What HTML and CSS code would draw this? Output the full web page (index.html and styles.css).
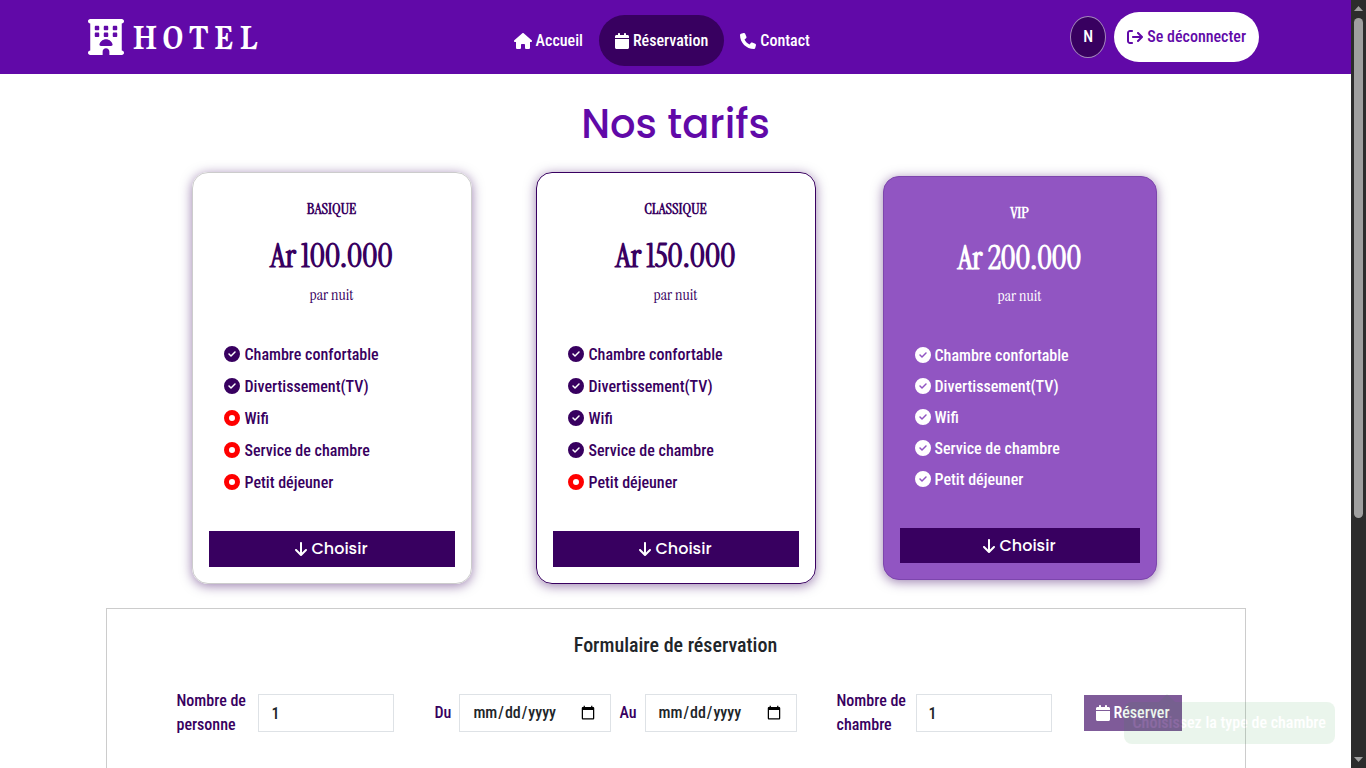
FILE: index.html
```html
<!DOCTYPE html>
<html lang="fr">
<head>
<meta charset="utf-8">
<meta name="viewport" content="width=device-width, initial-scale=1">
<title>Hotel - Réservation</title>
<link rel="stylesheet" href="styles.css">
</head>
<body>
<svg class="sprite" aria-hidden="true">
  <symbol id="i-hotel" viewBox="0 0 512 512"><path d="M0 32C0 14.3 14.3 0 32 0H480c17.7 0 32 14.3 32 32s-14.3 32-32 32V448c17.7 0 32 14.3 32 32s-14.3 32-32 32H304V464c0-26.5-21.5-48-48-48s-48 21.5-48 48v48H32c-17.7 0-32-14.3-32-32s14.3-32 32-32V64C14.3 64 0 49.7 0 32zm96 80v32c0 8.8 7.2 16 16 16h32c8.8 0 16-7.2 16-16V112c0-8.8-7.2-16-16-16H112c-8.8 0-16 7.2-16 16zM240 96c-8.8 0-16 7.2-16 16v32c0 8.8 7.2 16 16 16h32c8.8 0 16-7.2 16-16V112c0-8.8-7.2-16-16-16H240zm112 16v32c0 8.8 7.2 16 16 16h32c8.8 0 16-7.2 16-16V112c0-8.8-7.2-16-16-16H368c-8.8 0-16 7.2-16 16zM112 192c-8.8 0-16 7.2-16 16v32c0 8.8 7.2 16 16 16h32c8.8 0 16-7.2 16-16V208c0-8.8-7.2-16-16-16H112zm112 16v32c0 8.8 7.2 16 16 16h32c8.8 0 16-7.2 16-16V208c0-8.8-7.2-16-16-16H240c-8.8 0-16 7.2-16 16zm144-16c-8.8 0-16 7.2-16 16v32c0 8.8 7.2 16 16 16h32c8.8 0 16-7.2 16-16V208c0-8.8-7.2-16-16-16H368zM328 384c13.3 0 24.3-10.9 21-23.8c-10.6-41.5-48.2-72.2-93-72.2s-82.5 30.7-93 72.2c-3.3 12.8 7.8 23.8 21 23.8H328z"/></symbol>
  <symbol id="i-house" viewBox="0 0 576 512"><path d="M575.8 255.5c0 18-15 32.1-32 32.1h-32l.7 160.2c0 2.7-.2 5.4-.5 8.1V472c0 22.1-17.9 40-40 40H456c-1.1 0-2.2 0-3.3-.1c-1.4 .1-2.8 .1-4.2 .1H416 392c-22.1 0-40-17.9-40-40V448 384c0-17.7-14.3-32-32-32H256c-17.7 0-32 14.3-32 32v64 24c0 22.1-17.9 40-40 40H160 128.1c-1.5 0-3-.1-4.5-.2c-1.2 .1-2.4 .2-3.6 .2H104c-22.1 0-40-17.9-40-40V360c0-.9 0-1.9 .1-2.8V287.6H32c-18 0-32-14-32-32.1c0-9 3-17 10-24L266.4 8c7-7 15-8 22-8s15 2 21 7L564.8 231.5c8 7 12 15 11 24z"/></symbol>
  <symbol id="i-calendar" viewBox="0 0 448 512"><path d="M96 32V64H48C21.5 64 0 85.5 0 112v48H448V112c0-26.5-21.5-48-48-48H352V32c0-17.7-14.3-32-32-32s-32 14.3-32 32V64H160V32c0-17.7-14.3-32-32-32S96 14.3 96 32zM448 192H0V464c0 26.5 21.5 48 48 48H400c26.5 0 48-21.5 48-48V192z"/></symbol>
  <symbol id="i-phone" viewBox="0 0 512 512"><path d="M164.9 24.6c-7.7-18.6-28-28.5-47.4-23.2l-88 24C12.1 30.2 0 46 0 64C0 311.4 200.6 512 448 512c18 0 33.8-12.1 38.6-29.5l24-88c5.3-19.4-4.6-39.7-23.2-47.4l-96-40c-16.3-6.8-35.2-2.1-46.3 11.6L304.7 368C234.3 334.7 177.3 277.7 144 207.3L193.3 167c13.7-11.2 18.4-30 11.6-46.3l-40-96z"/></symbol>
  <symbol id="i-exit" viewBox="0 0 512 512"><path d="M502.6 278.6c12.5-12.5 12.5-32.8 0-45.3l-128-128c-12.5-12.5-32.8-12.5-45.3 0s-12.5 32.8 0 45.3L402.7 224H192c-17.7 0-32 14.3-32 32s14.3 32 32 32H402.7l-73.4 73.4c-12.5 12.5-12.5 32.8 0 45.3s32.8 12.5 45.3 0l128-128zM160 96c17.7 0 32-14.3 32-32s-14.3-32-32-32H96C43 32 0 75 0 128V384c0 53 43 96 96 96h64c17.7 0 32-14.3 32-32s-14.3-32-32-32H96c-17.7 0-32-14.3-32-32V128c0-17.7 14.3-32 32-32h64z"/></symbol>
  <symbol id="i-check" viewBox="0 0 512 512"><path d="M256 512A256 256 0 1 0 256 0a256 256 0 1 0 0 512zM369 209L241 337c-9.4 9.4-24.6 9.4-33.9 0l-64-64c-9.4-9.4-9.4-24.6 0-33.9s24.6-9.4 33.9 0l47 47L335 175c9.4-9.4 24.6-9.4 33.9 0s9.4 24.6 0 33.9z"/></symbol>
  <symbol id="i-dot" viewBox="0 0 512 512"><path fill-rule="evenodd" d="M256 512A256 256 0 1 0 256 0a256 256 0 1 0 0 512zM256 160a96 96 0 1 1 0 192 96 96 0 1 1 0-192z"/></symbol>
  <symbol id="i-down" viewBox="0 0 384 512"><path d="M169.4 470.6c12.5 12.5 32.8 12.5 45.3 0l160-160c12.5-12.5 12.5-32.8 0-45.3s-32.8-12.5-45.3 0L224 370.8 224 64c0-17.7-14.3-32-32-32s-32 14.3-32 32l0 306.7L54.6 265.4c-12.5-12.5-32.8-12.5-45.3 0s-12.5 32.8 0 45.3l160 160z"/></symbol>
</svg>

<div class="window">
  <div class="page">
    <header class="header">
      <a class="brand" href="#"><svg class="brand-icon"><use href="#i-hotel"/></svg><span class="brand-name">HOTEL</span></a>
      <nav class="nav">
        <a class="nav-link" href="#"><svg class="icon icon-wide"><use href="#i-house"/></svg>Accueil</a>
        <a class="nav-link nav-link-active" href="#"><svg class="icon icon-narrow"><use href="#i-calendar"/></svg>Réservation</a>
        <a class="nav-link" href="#"><svg class="icon"><use href="#i-phone"/></svg>Contact</a>
      </nav>
      <div class="account">
        <span class="avatar">N</span>
        <button class="logout" type="button"><svg class="icon"><use href="#i-exit"/></svg>Se déconnecter</button>
      </div>
    </header>

    <main class="main">
      <h1 class="heading">Nos tarifs</h1>

      <section class="plans">
        <article class="plan">
          <h2 class="plan-name">BASIQUE</h2>
          <p class="plan-price">Ar 100.000</p>
          <p class="plan-unit">par nuit</p>
          <ul class="features">
            <li class="feature"><svg class="icon"><use href="#i-check"/></svg>Chambre confortable</li>
            <li class="feature"><svg class="icon"><use href="#i-check"/></svg>Divertissement(TV)</li>
            <li class="feature"><svg class="icon icon-off"><use href="#i-dot"/></svg>Wifi</li>
            <li class="feature"><svg class="icon icon-off"><use href="#i-dot"/></svg>Service de chambre</li>
            <li class="feature"><svg class="icon icon-off"><use href="#i-dot"/></svg>Petit déjeuner</li>
          </ul>
          <button class="choose" type="button"><svg class="icon icon-arrow"><use href="#i-down"/></svg>Choisir</button>
        </article>

        <article class="plan plan-classic">
          <h2 class="plan-name">CLASSIQUE</h2>
          <p class="plan-price">Ar 150.000</p>
          <p class="plan-unit">par nuit</p>
          <ul class="features">
            <li class="feature"><svg class="icon"><use href="#i-check"/></svg>Chambre confortable</li>
            <li class="feature"><svg class="icon"><use href="#i-check"/></svg>Divertissement(TV)</li>
            <li class="feature"><svg class="icon"><use href="#i-check"/></svg>Wifi</li>
            <li class="feature"><svg class="icon"><use href="#i-check"/></svg>Service de chambre</li>
            <li class="feature"><svg class="icon icon-off"><use href="#i-dot"/></svg>Petit déjeuner</li>
          </ul>
          <button class="choose" type="button"><svg class="icon icon-arrow"><use href="#i-down"/></svg>Choisir</button>
        </article>

        <article class="plan plan-vip">
          <h2 class="plan-name">VIP</h2>
          <p class="plan-price">Ar 200.000</p>
          <p class="plan-unit">par nuit</p>
          <ul class="features">
            <li class="feature"><svg class="icon"><use href="#i-check"/></svg>Chambre confortable</li>
            <li class="feature"><svg class="icon"><use href="#i-check"/></svg>Divertissement(TV)</li>
            <li class="feature"><svg class="icon"><use href="#i-check"/></svg>Wifi</li>
            <li class="feature"><svg class="icon"><use href="#i-check"/></svg>Service de chambre</li>
            <li class="feature"><svg class="icon"><use href="#i-check"/></svg>Petit déjeuner</li>
          </ul>
          <button class="choose" type="button"><svg class="icon icon-arrow"><use href="#i-down"/></svg>Choisir</button>
        </article>
      </section>

      <form class="booking">
        <h2 class="booking-title">Formulaire de réservation</h2>
        <div class="booking-row">
          <div class="field field-guests">
            <label class="label" for="guests">Nombre de personne</label>
            <input class="input" id="guests" type="number" value="1" min="1">
          </div>
          <div class="dates">
            <div class="field"><label class="label" for="from">Du</label><input class="input" id="from" type="date"></div>
            <div class="field"><label class="label" for="to">Au</label><input class="input" id="to" type="date"></div>
          </div>
          <div class="field field-rooms">
            <label class="label" for="rooms">Nombre de chambre</label>
            <input class="input" id="rooms" type="number" value="1" min="1">
          </div>
          <div class="submit">
            <button class="reserve" type="submit" disabled><svg class="icon icon-narrow"><use href="#i-calendar"/></svg>Réserver</button>
            <div class="hint" role="tooltip">Choisissez la type de chambre</div>
          </div>
        </div>
      </form>
    </main>
  </div>
  <div class="scrollbar" aria-hidden="true">
    <svg class="scroll-arrow" viewBox="0 0 15 15"><path d="M3 11h9L7.500 6z"/></svg>
    <div class="scroll-track"><div class="scroll-thumb"></div></div>
    <svg class="scroll-arrow" viewBox="0 0 15 15"><path d="M3 4h9L7.500 9z"/></svg>
  </div>
</div>
</body>
</html>
```

FILE: styles.css
```css
:root {
  --violet: #6109a8;
  --dark: #380060;
  --ui: "Roboto Condensed", "Liberation Sans Narrow", Roboto, sans-serif;
  --serif: "Instrument Serif", "Liberation Serif", serif;
  --brand: Gupter, "Liberation Serif", serif;
  --display: Poppins, Inter, sans-serif;
}

* { box-sizing: border-box; }

body {
  margin: 0;
  background: #fff;
  color: #212529;
  font: 500 16px/24px var(--ui);
}

h1, h2, p, ul { margin: 0; padding: 0; }
a { color: inherit; text-decoration: none; }
button, input { font: inherit; }

.sprite { position: absolute; width: 0; height: 0; }

.icon {
  width: 16px;
  height: 16px;
  flex: none;
  fill: currentColor;
}
.icon-wide { width: 18px; }
.icon-narrow { width: 14px; }
.icon-arrow { width: 12px; }
.icon-off { fill: #f00; }

.window { display: flex; height: 100vh; }
.page { flex: 1; min-width: 0; overflow: hidden; }

/* Header */
.header {
  display: flex;
  align-items: center;
  justify-content: space-between;
  height: 74px;
  padding: 0 92px 0 88px;
  background: var(--violet);
  color: #fff;
}
.brand { display: flex; align-items: center; gap: 8px; }
.brand-icon { width: 36px; height: 36px; fill: currentColor; }
.brand-name {
  padding-top: 2px;
  font: 700 36px/40px var(--brand);
  letter-spacing: 5px;
}
.nav { display: flex; margin: 7px 10px 0 0; }
.nav-link {
  display: flex;
  align-items: center;
  gap: 4px;
  height: 51px;
  padding: 0 16px;
  border-radius: 26px;
}
.nav-link-active { background: var(--dark); }
.account { display: flex; align-items: center; gap: 8px; }
.avatar {
  display: grid;
  place-items: center;
  width: 36px;
  height: 42px;
  border: 1px solid #a487bb;
  border-radius: 50%;
  background: var(--dark);
}
.logout {
  display: flex;
  align-items: center;
  gap: 4px;
  height: 50px;
  padding: 0 13px;
  border: 0;
  border-radius: 25px;
  background: #fff;
  color: var(--violet);
}

/* Plans */
.heading {
  padding: 25px 0 23px;
  color: var(--violet);
  font: 500 40px/50px var(--display);
  text-align: center;
}
.plans {
  display: flex;
  justify-content: center;
  gap: 64px;
  color: var(--dark);
}
.plan {
  width: 280px;
  padding: 16px;
  border: 1px solid #ccc;
  border-radius: 16px;
  box-shadow: 0 2px 12px rgba(56, 0, 96, .5);
  text-align: center;
}
.plan-classic { border-color: var(--dark); }
.plan-name { font: 700 16px/40px var(--serif); }
.plan-price { font: 700 33px/54px var(--serif); }
.plan-unit { font: 400 16px/24px var(--serif); }
.features { margin: 32px 0; padding-left: 15px; list-style: none; }
.feature { display: flex; align-items: center; gap: 5px; height: 32px; }
.feature .icon { margin-bottom: 2px; }
.choose {
  display: flex;
  align-items: center;
  justify-content: center;
  gap: 4px;
  width: 100%;
  height: 36px;
  border: 0;
  background: var(--dark);
  color: #fff;
  font: 500 16px/24px var(--display);
}
.plan-vip {
  width: 274px;
  margin: 4px 3px;
  border-color: #7d46ad;
  background: #9155c2;
  color: #fff;
}
.plan-vip .plan-price { font-size: 32px; line-height: 51px; }
.plan-vip .features { margin-bottom: 33px; }
.plan-vip .feature { gap: 4px; height: 31px; }
.plan-vip .choose { height: 35px; }

/* Booking form */
.booking {
  max-width: 1140px;
  min-height: 320px;
  margin: 24px auto 0;
  padding: 24px 0;
  border: 1px solid #ccc;
}
.booking-title { font: 500 20px/24px var(--ui); text-align: center; }
.booking-row {
  display: flex;
  align-items: center;
  justify-content: center;
  gap: 32px;
  margin-top: 32px;
  padding-left: 7px;
}
.field { display: flex; align-items: center; gap: 8px; }
.dates { display: flex; gap: 8px; margin: 0 8px; }
.label { color: var(--dark); }
.field-guests .label { width: 74px; }
.field-rooms .label { width: 71px; }
.input {
  width: 152px;
  height: 38px;
  padding: 6px 12px;
  border: 1px solid #dee2e6;
  background: #fff;
  color: #212529;
}
.field-guests .input, .field-rooms .input { width: 136px; appearance: textfield; }
.submit { position: relative; }
.reserve {
  display: flex;
  align-items: center;
  gap: 4px;
  height: 36px;
  padding: 0 12px;
  border: 0;
  background: #7f5b99;
  color: #fff;
}
.hint {
  position: absolute;
  top: 7px;
  left: 40px;
  padding: 9px;
  border-radius: 8px;
  background: #289a38;
  color: #fff;
  opacity: .09;
  white-space: nowrap;
}
.hint::before {
  content: "";
  position: absolute;
  bottom: 100%;
  left: 35px;
  border: 8px solid transparent;
  border-top: 0;
  border-bottom-color: #289a38;
}

/* Scrollbar */
.scrollbar {
  display: flex;
  flex-direction: column;
  width: 15px;
  background: #2c2c2c;
}
.scroll-arrow { width: 15px; height: 15px; fill: #9f9f9f; }
.scroll-track { flex: 1; padding: 3px 3px 0; }
.scroll-thumb { height: 68%; border-radius: 5px; background: #9f9f9f; }
```
